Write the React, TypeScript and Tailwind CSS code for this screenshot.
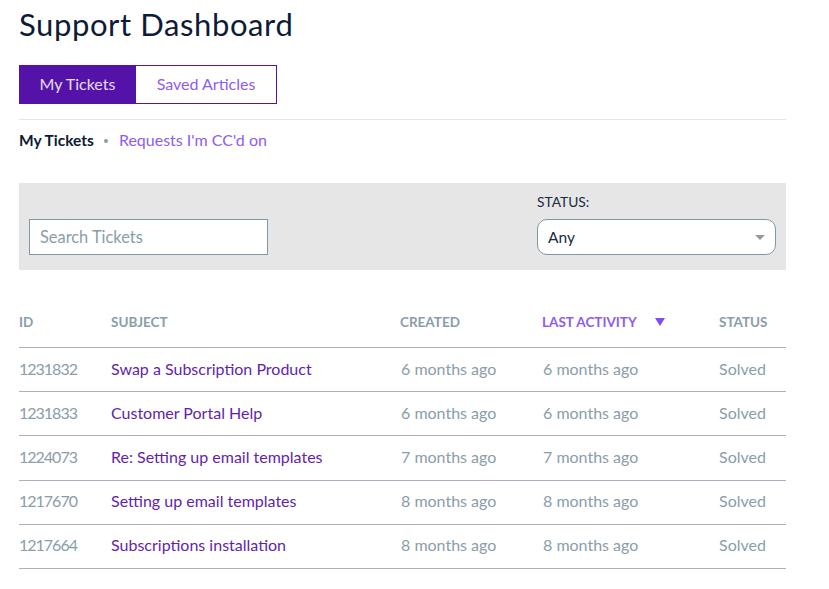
const rows = [
  ["1231832", "Swap a Subscription Product", "6 months ago"],
  ["1231833", "Customer Portal Help", "6 months ago"],
  ["1224073", "Re: Setting up email templates", "7 months ago"],
  ["1217670", "Setting up email templates", "8 months ago"],
  ["1217664", "Subscriptions installation", "8 months ago"],
];

export default function App() {
  return (
    <div className="w-[829px] h-[589px] bg-white overflow-hidden font-['Lato','Liberation_Sans',sans-serif] text-[#0b1a33]">
      <div className="ml-[19px] w-[767px]">
        <h1 className="pt-[6px] h-[65px] text-[31px] leading-[36px] tracking-[0.6px] font-normal text-[#0c1b36]">Support Dashboard</h1>
        <div className="flex h-[39px] w-[258px] text-[16px] leading-[20px]">
          <button className="w-[117px] pb-[2px] bg-[#5412a8] text-white/85">My Tickets</button>
          <button className="w-[141px] pb-[2px] border border-[#5412a8] border-l-0 bg-white text-[#8f5cf0]">Saved Articles</button>
        </div>
        <div className="mt-[15px] border-t border-[#e5e5e5] pt-[10px] h-[64px] flex items-start text-[16px] leading-[20px]">
          <span className="font-bold text-[#0b1a33] text-[15.5px]">My Tickets</span>
          <span className="ml-[10px] mr-[11px] mt-[9px] w-[4px] h-[4px] rounded-full bg-[#8a9daa]"></span>
          <a className="text-[#8f5cf0]">Requests I'm CC'd on</a>
        </div>
        <div className="h-[87px] bg-[#e6e6e6] flex justify-between items-end px-[10px] pb-[15px]">
          <input
            placeholder="Search Tickets"
            className="w-[239px] h-[36px] border border-[#7f98a6] bg-white px-[10px] pb-[2px] text-[16.4px] placeholder:text-[#8a9daa] outline-none"
          />
          <div className="w-[239px]">
            <div className="text-[13.8px] leading-[18px] mb-[8px] text-[#1a2a3f]">STATUS:</div>
            <div className="h-[36px] border border-[#7f98a6] rounded-[10px] bg-white flex items-center justify-between pl-[10px] pr-[10px] text-[15.5px] text-[#1a2a3f]">
              <span className="pt-[2px]">Any</span>
              <svg width="10" height="5" viewBox="0 0 10 5"><path d="M0 0H10L5 5Z" fill="#999999" /></svg>
            </div>
          </div>
        </div>
        <div className="mt-[33px] grid grid-cols-[92px_290px_142px_176px_67px] h-[45px] border-b border-[#a9b3bd] items-center pb-[6px] text-[13.5px] font-bold text-[#8a9daa]">
          <div>ID</div>
          <div>SUBJECT</div>
          <div className="-ml-px">CREATED</div>
          <div className="-ml-px flex items-center text-[#8f5cf0]">
            <span className="w-[113px]">LAST ACTIVITY</span>
            <svg width="10" height="8" viewBox="0 0 10 8"><path d="M0 0H10L5 8Z" fill="#7c4df0" /></svg>
          </div>
          <div>STATUS</div>
        </div>
        {rows.map((r) => (
          <div key={r[0]} className="grid grid-cols-[92px_290px_142px_176px_67px] h-[44.2px] border-b border-[#a9b3bd] items-center pb-[2px] text-[16px] text-[#8a9daa]">
            <div className="tracking-[-1px]">{r[0]}</div>
            <a className="text-[#5f1fb0]">{r[1]}</a>
            <div>{r[2]}</div>
            <div>{r[2]}</div>
            <div>Solved</div>
          </div>
        ))}
      </div>
    </div>
  );
}
